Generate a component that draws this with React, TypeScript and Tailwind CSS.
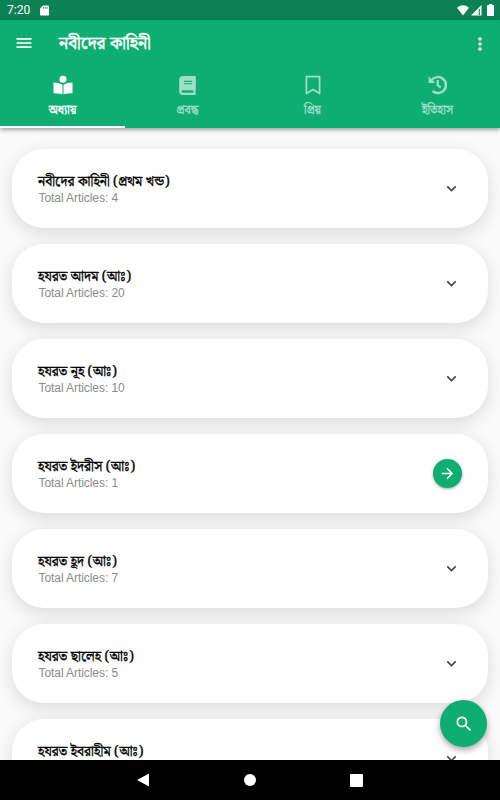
import type { ReactNode } from 'react';
import { FaBook } from 'react-icons/fa';
import { MdArrowForward, MdExpandMore, MdMenu, MdMoreVert, MdSearch } from 'react-icons/md';

interface Chapter {
  title: string;
  count?: number;
}

const chapters: Chapter[] = [
  { title: 'নবীদের কাহিনী (প্রথম খন্ড)', count: 4 },
  { title: 'হযরত আদম (আঃ)', count: 20 },
  { title: 'হযরত নূহ (আঃ)', count: 10 },
  { title: 'হযরত ইদরীস (আঃ)', count: 1 },
  { title: 'হযরত হূদ (আঃ)', count: 7 },
  { title: 'হযরত ছালেহ (আঃ)', count: 5 },
  { title: 'হযরত ইবরাহীম (আঃ)' },
];

function ReaderIcon() {
  return (
    <svg viewBox="0 0 20 20" className="size-5" fill="currentColor">
      <circle cx="10" cy="4.200" r="3.500" />
      <path d="M.5 7.500Q6 7.500 9.500 9.700v9.600Q6 18.300.5 18.300z" />
      <path d="M19.500 7.500Q14 7.500 10.500 9.700v9.600Q14 18.300 19.500 18.300z" />
    </svg>
  );
}

function BookmarkIcon() {
  return (
    <svg viewBox="0 0 16 20" className="h-5 w-4" fill="none" stroke="currentColor" strokeWidth="1.700" strokeLinejoin="round">
      <path d="M1.400 1.600h13.200v16.800L8 14.400l-6.600 4z" />
    </svg>
  );
}

function HistoryIcon() {
  return (
    <svg viewBox="0 0 20 20" className="size-5" fill="none" stroke="currentColor">
      <path d="M3.500 5.300A8 8 0 1 1 4.600 16" strokeWidth="2.500" />
      <path d="M.6 1.300L7.200 7.900H.6z" fill="currentColor" stroke="none" />
      <path d="M9.700 5v5.300l2.900 2.200" strokeWidth="2.300" />
    </svg>
  );
}

function StatusBar() {
  return (
    <div className="flex h-5 items-center justify-between bg-[#0b8156] pr-1.5 pl-[7px] text-white">
      <div className="flex items-center gap-[10px]">
        <span className="font-['Roboto',sans-serif] text-[12px] leading-5">7:20</span>
        <svg viewBox="0 0 9 11" className="h-[11px] w-[9px]">
          <path d="M3 .5h5.200q.8 0 .8.800v8.400q0 .8-.8.800H.8Q0 10.500 0 9.700V3.500z" fill="#fff" />
          <path d="M3.500 2v1.800M5.300 2v1.800M7.100 2v1.800" stroke="#0b8156" strokeWidth=".8" />
        </svg>
      </div>
      <div className="flex items-center">
        <svg viewBox="0 0 12 11" className="h-[11px] w-3">
          <path d="M0 2.700Q6-2 12 2.700L6 10.500z" fill="#fff" />
        </svg>
        <svg viewBox="0 0 11 11" className="ml-[2px] h-[11px] w-[11px]">
          <path d="M0 10.500L10.500 0v10.500z" fill="#fff" />
          <path d="M8.300 4v6" stroke="#0b8156" strokeWidth="1.100" />
        </svg>
        <svg viewBox="0 0 7 12" className="ml-[5px] h-3 w-[7px]">
          <path d="M2 0h3v1h1.300q.7 0 .7.700v9.600q0 .7-.7.700H.7Q0 12 0 11.300V1.700Q0 1 .7 1H2z" fill="#fff" />
        </svg>
      </div>
    </div>
  );
}

function Tab({ icon, label, active = false }: { icon: ReactNode; label: string; active?: boolean }) {
  return (
    <div
      className={`flex flex-1 flex-col items-center border-b-2 pt-2 ${
        active ? 'border-white text-white' : 'border-transparent text-[#9fdec7]'
      }`}
    >
      <div className="flex h-5 items-center">{icon}</div>
      <span className="mt-[7px] text-[12px] leading-[18px] whitespace-nowrap [-webkit-text-stroke:0.35px_currentColor]">
        {label}
      </span>
    </div>
  );
}

function ChapterCard({ title, count }: Chapter) {
  return (
    <div className="flex h-[79px] shrink-0 items-center justify-between rounded-[32px] bg-white px-[26px] shadow-[0_5px_18px_rgba(0,0,0,0.13)]">
      <div className="h-[34px]">
        <div className="pt-px text-[13.700px] leading-[18px] whitespace-nowrap text-black [-webkit-text-stroke:0.350px_black]">
          {title}
        </div>
        {count !== undefined && (
          <div className="pl-[0.500px] font-['Liberation_Sans',sans-serif] text-[12px] leading-[15px] tracking-[-0.070px] text-[#8b8b8b]">
            Total Articles: {count}
          </div>
        )}
      </div>
      {count === 1 ? (
        <div className="flex size-[29px] items-center justify-center rounded-full bg-[#10ad73] text-white shadow-[0_1px_3px_rgba(0,0,0,0.35)]">
          <MdArrowForward size={17} />
        </div>
      ) : (
        <MdExpandMore size={19} className="mr-[1px] text-[#424242]" />
      )}
    </div>
  );
}

export default function App() {
  return (
    <div className="relative flex h-[800px] w-[500px] flex-col overflow-hidden bg-[#fafafa] font-['Noto_Serif_Bengali','Noto_Sans_Bengali','Noto_Sans',sans-serif]">
      <StatusBar />
      <header className="z-10 flex h-[108px] shrink-0 flex-col bg-[#10ad73] text-white shadow-[0_2px_4px_rgba(0,0,0,0.35)]">
        <div className="flex h-[47px] items-center pr-[11px] pl-[14px]">
          <MdMenu size={20} className="mb-px" />
          <h1 className="ml-[25px] flex-1 pt-px text-[17.500px] leading-6 whitespace-nowrap [-webkit-text-stroke:0.5px_white]">
            নবীদের কাহিনী
          </h1>
          <MdMoreVert size={20} className="-mr-px" />
        </div>
        <nav className="flex flex-1">
          <Tab active icon={<ReaderIcon />} label="অধ্যায়" />
          <Tab icon={<FaBook size={19} />} label="প্রবন্ধ" />
          <Tab icon={<BookmarkIcon />} label="প্রিয়" />
          <Tab icon={<HistoryIcon />} label="ইতিহাস" />
        </nav>
      </header>
      <main className="flex min-h-0 flex-1 flex-col gap-4 overflow-hidden px-3 pt-[21px]">
        {chapters.map((chapter) => (
          <ChapterCard key={chapter.title} {...chapter} />
        ))}
      </main>
      <button className="absolute top-[700px] left-[440px] z-10 flex size-[47px] items-center justify-center rounded-full bg-[#10ad73] text-white shadow-[0_3px_6px_rgba(0,0,0,0.35)]">
        <MdSearch size={20} />
      </button>
      <footer className="z-20 flex h-10 shrink-0 items-center bg-black text-white">
        <svg viewBox="0 0 12 14" className="ml-[137px] h-[14px] w-3">
          <path d="M12 .5v13L0 7z" fill="currentColor" />
        </svg>
        <div className="ml-[95px] size-3 rounded-full bg-white" />
        <div className="ml-[94px] size-[13px] rounded-[1px] bg-white" />
      </footer>
    </div>
  );
}
